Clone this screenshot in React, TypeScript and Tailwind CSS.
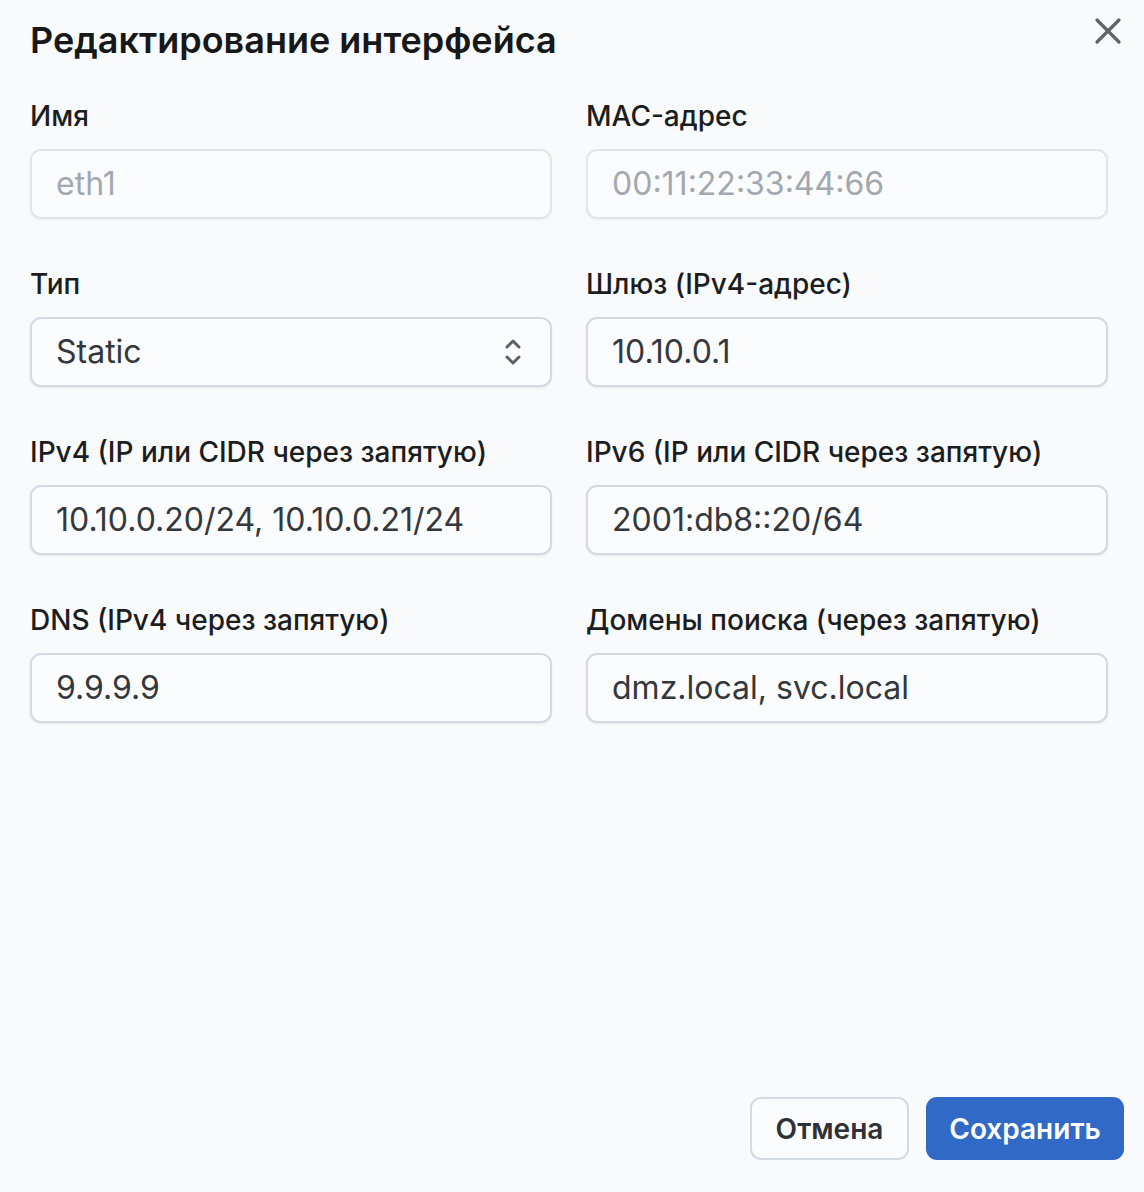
import { X } from "lucide-react";

interface Field {
  label: string;
  value: string;
  disabled?: boolean;
  select?: boolean;
}

const FIELDS: Field[] = [
  { label: "Имя", value: "eth1", disabled: true },
  { label: "MAC-адрес", value: "00:11:22:33:44:66", disabled: true },
  { label: "Тип", value: "Static", select: true },
  { label: "Шлюз (IPv4-адрес)", value: "10.10.0.1" },
  { label: "IPv4 (IP или CIDR через запятую)", value: "10.10.0.20/24, 10.10.0.21/24" },
  { label: "IPv6 (IP или CIDR через запятую)", value: "2001:db8::20/64" },
  { label: "DNS (IPv4 через запятую)", value: "9.9.9.9" },
  { label: "Домены поиска (через запятую)", value: "dmz.local, svc.local" },
];

function SelectChevrons() {
  return (
    <svg width="18" height="32" viewBox="0 0 18 32" fill="none" className="text-[#5c6068]">
      <path d="M3 11 L9 5 L15 11" stroke="currentColor" strokeWidth="3" strokeLinecap="round" strokeLinejoin="round" />
      <path d="M3 21 L9 27 L15 21" stroke="currentColor" strokeWidth="3" strokeLinecap="round" strokeLinejoin="round" />
    </svg>
  );
}

function FormField({ field }: { field: Field }) {
  return (
    <div className="flex flex-col gap-[16px]">
      <label className="text-[28px] leading-[34px] font-medium text-[#1c1d1f]">
        {field.label}
      </label>
      <div
        className={
          field.disabled
            ? "flex h-[70px] items-center rounded-[11px] border-2 border-[#e1e6ed] bg-[#fbfcfd] pl-[24px] pr-[28px] shadow-[0_1px_2px_rgba(15,23,42,0.06)]"
            : "flex h-[70px] items-center rounded-[11px] border-2 border-[#d3dae4] bg-[#fbfcfd] pl-[24px] pr-[28px] shadow-[0_1px_2px_rgba(15,23,42,0.08)]"
        }
      >
        <span
          className={
            field.disabled
              ? "flex-1 text-[32px] text-[#a3a8b0]"
              : "flex-1 text-[32px] text-[#34373c]"
          }
        >
          {field.value}
        </span>
        {field.select && <SelectChevrons />}
      </div>
    </div>
  );
}

export default function App() {
  return (
    <div
      className="flex min-h-[1192px] w-full flex-col bg-[#f9fafc] pb-[32px] pl-[30px] pr-[20px] pt-[14px]"
      style={{ fontFamily: "Inter, 'Noto Sans', sans-serif" }}
    >
      {/* Header */}
      <div className="flex items-start justify-between">
        <h1 className="text-[36px] leading-[52px] font-semibold text-[#17181a]">
          Редактирование интерфейса
        </h1>
        <button className="-mr-[6px] -mt-[5px] text-[#5f646b]">
          <X className="h-[44px] w-[44px]" strokeWidth={1.8} />
        </button>
      </div>

      {/* Form grid */}
      <div className="mt-[33px] grid grid-cols-2 gap-x-[34px] gap-y-[48px] pr-[16px]">
        {FIELDS.map((f) => (
          <FormField key={f.label} field={f} />
        ))}
      </div>

      <div className="flex-1" />

      {/* Footer */}
      <div className="flex justify-end gap-[17px]">
        <button className="h-[63px] w-[159px] rounded-[11px] border-2 border-[#d3dae4] bg-[#fbfcfd] text-[28px] font-semibold text-[#2e3135]">
          Отмена
        </button>
        <button className="h-[63px] w-[198px] rounded-[11px] bg-[#3169c6] text-[28px] font-semibold text-white">
          Сохранить
        </button>
      </div>
    </div>
  );
}
